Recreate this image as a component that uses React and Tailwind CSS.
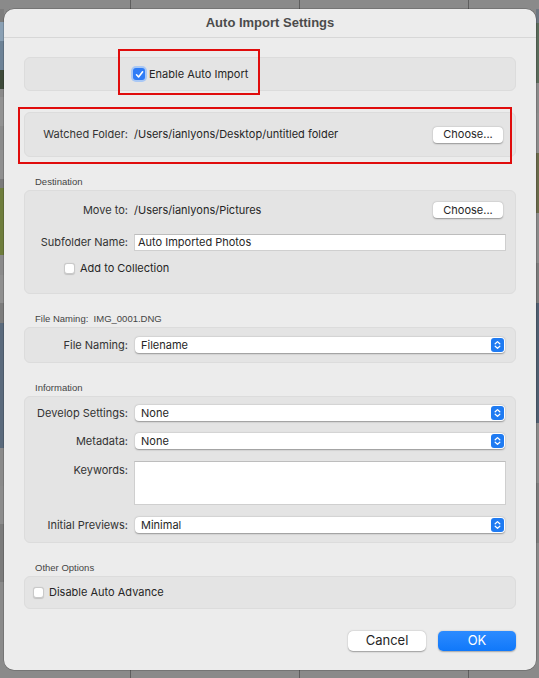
import React from "react";

const INTER = "font-['Inter','Liberation_Sans',Arial,sans-serif]";

function Stepper() {
  return (
    <div className="w-[13px] h-[14px] rounded-[3px] bg-[#1f7bf2] flex items-center justify-center">
      <svg width="7" height="10" viewBox="0 0 7 10">
        <path d="M1.2 3.8 L3.5 1.6 L5.8 3.8 M1.2 6.2 L3.5 8.4 L5.8 6.2" stroke="white" strokeWidth="1.3" fill="none" strokeLinecap="round" strokeLinejoin="round" />
      </svg>
    </div>
  );
}

function Select({ value }) {
  return (
    <div className={"ml-[1px] w-[370px] h-[16px] bg-white rounded-[4px] shadow-[0_0.5px_1.5px_rgba(0,0,0,0.35)] flex items-center justify-between pl-[6px] pr-[1px] text-[11px] text-[#262626] " + INTER}>
      <span>{value}</span>
      <Stepper />
    </div>
  );
}

function Label({ children, className = "" }) {
  return <div className={"w-[103px] shrink-0 text-right text-[11px] text-[#333] " + INTER + " " + className}>{children}</div>;
}

function ChooseButton() {
  return (
    <div className={"w-[70px] h-[16px] bg-white rounded-[4px] shadow-[0_0.5px_1.5px_rgba(0,0,0,0.35)] flex items-center justify-center text-[11px] text-[#262626] " + INTER}>
      Choose...
    </div>
  );
}

function Checkbox() {
  return <div className="w-[11px] h-[11px] shrink-0 bg-white rounded-[3px] border border-[#c9c9c9] shadow-[0_0.5px_1px_rgba(0,0,0,0.15)]" />;
}

function SectionLabel({ children }) {
  return <div className="mt-[19px] h-[12px] mb-[2px] pl-[11px] text-[9.5px] leading-[12px] text-[#444]">{children}</div>;
}

function Panel({ children, className = "" }) {
  return <div className={"bg-[#e4e4e4] border border-[#dcdcdc] rounded-[6px] " + className}>{children}</div>;
}

function Strip({ blocks }) {
  return (
    <div className="flex flex-col h-full w-full">
      {blocks.map((b, i) => (
        <div key={i} className="w-full" style={{ height: b[0], background: b[1] }} />
      ))}
    </div>
  );
}

const leftBlocks = [
  [9, "#8a8a8a"], [14, "#7d7d7d"], [20, "#8aa0b4"], [30, "#6d8296"], [20, "#3e4a3a"], [8, "#8a8a8a"],
  [30, "#929292"], [25, "#8a8a8a"], [30, "#8f8f8f"], [10, "#7a7a7a"], [70, "#6e7d3c"], [20, "#8a8a8a"],
  [30, "#8f8f8f"], [20, "#7c7c7c"], [130, "#5a6a7c"], [40, "#8a8a8a"], [40, "#8c8c8c"], [60, "#7b7b7b"], [100, "#8a8a8a"],
];
const rightBlocks = [
  [9, "#8a8a8a"], [14, "#6d7680"], [60, "#5a6a5a"], [30, "#8a8a8a"], [40, "#8c8c8c"], [60, "#6a6a4a"],
  [50, "#8a8a8a"], [40, "#7b7b7b"], [120, "#4f5e70"], [60, "#8a8a8a"], [60, "#7c7c7c"], [135, "#8a8a8a"],
];

export default function App() {
  return (
    <div className="w-[539px] h-[678px] bg-[#8a8a8a] overflow-hidden flex font-['Liberation_Sans',Arial,sans-serif]">
      <div className="w-[4px] h-full shrink-0">
        <Strip blocks={leftBlocks} />
      </div>
      <div className="w-[532px] shrink-0 flex flex-col">
        <div className="h-[9px] flex shrink-0">
          <div className="w-[127px] border-r border-[#5e5e5e]" />
          <div className="w-[169px] border-r border-[#5e5e5e]" />
          <div className="w-[169px] border-r border-[#5e5e5e]" />
          <div className="flex-1" />
        </div>
        <div className="relative h-[661px] bg-[#ececec] rounded-[10px] shadow-[0_0_0_0.5px_rgba(0,0,0,0.3)] flex flex-col px-[20px]">
          <div className="-mx-[20px] h-[29px] border-b border-[#d7d7d7] flex items-center justify-center text-[13px] font-bold text-[#4b4b4b]">
            Auto Import Settings
          </div>

          <Panel className="mt-[19px] h-[34px] flex items-center">
            <div className="ml-[106px] w-[16px] h-[16px] rounded-[5px] bg-[#a9c8f5] flex items-center justify-center">
              <div className="w-[12px] h-[12px] rounded-[3px] bg-[#2f7cf6] flex items-center justify-center">
                <svg width="9" height="9" viewBox="0 0 9 9">
                  <path d="M1.5 4.8 L3.6 7 L7.6 1.8" stroke="white" strokeWidth="1.6" fill="none" strokeLinecap="round" strokeLinejoin="round" />
                </svg>
              </div>
            </div>
            <span className={"ml-[2px] text-[11px] text-[#262626] " + INTER}>Enable Auto Import</span>
          </Panel>

          <Panel className="mt-[21px] h-[45px] flex items-center pr-[12px]">
            <Label>Watched Folder:</Label>
            <span className={"ml-[6px] flex-1 text-[11px] text-[#262626] " + INTER}>/Users/ianlyons/Desktop/untitled folder</span>
            <ChooseButton />
          </Panel>

          <SectionLabel>Destination</SectionLabel>
          <Panel className="h-[104px] pt-[11px] flex flex-col">
            <div className="flex items-center pr-[12px] h-[16px]">
              <Label>Move to:</Label>
              <span className={"ml-[6px] flex-1 text-[11px] text-[#262626] " + INTER}>/Users/ianlyons/Pictures</span>
              <ChooseButton />
            </div>
            <div className="mt-[16px] flex items-center h-[17px]">
              <Label>Subfolder Name:</Label>
              <div className={"ml-[6px] w-[372px] h-[17px] bg-white border border-[#cfcfcf] border-t-[#bdbdbd] flex items-center pl-[3px] text-[11px] text-[#262626] " + INTER}>
                Auto Imported Photos
              </div>
            </div>
            <div className="mt-[11px] h-[12px] flex items-center ml-[39px]">
              <Checkbox />
              <span className={"ml-[5px] text-[11px] text-[#262626] " + INTER}>Add to Collection</span>
            </div>
          </Panel>

          <SectionLabel>File Naming:&nbsp; IMG_0001.DNG</SectionLabel>
          <Panel className="h-[36px] flex items-center">
            <Label>File Naming:</Label>
            <div className="ml-[6px]"><Select value="Filename" /></div>
          </Panel>

          <SectionLabel>Information</SectionLabel>
          <Panel className="h-[147px] pt-[8px] flex flex-col">
            <div className="flex items-center">
              <Label>Develop Settings:</Label>
              <div className="ml-[6px]"><Select value="None" /></div>
            </div>
            <div className="mt-[11px] flex items-center">
              <Label>Metadata:</Label>
              <div className="ml-[6px]"><Select value="None" /></div>
            </div>
            <div className="mt-[12px] flex items-start">
              <Label className="mt-[1px]">Keywords:</Label>
              <div className="ml-[6px] w-[372px] h-[44px] bg-white border border-[#cfcfcf] border-t-[#bdbdbd]" />
            </div>
            <div className="mt-[12px] flex items-center">
              <Label>Initial Previews:</Label>
              <div className="ml-[6px]"><Select value="Minimal" /></div>
            </div>
          </Panel>

          <SectionLabel>Other Options</SectionLabel>
          <Panel className="h-[33px] flex items-center pl-[8px]">
            <Checkbox />
            <span className={"ml-[5px] text-[11px] text-[#262626] " + INTER}>Disable Auto Advance</span>
          </Panel>

          <div className="mt-[22px] flex justify-end gap-[12px]">
            <div className={"w-[78px] h-[20px] bg-white rounded-[5px] shadow-[0_0.5px_1.5px_rgba(0,0,0,0.35)] flex items-center justify-center text-[13px] text-[#262626] " + INTER}>
              Cancel
            </div>
            <div className={"w-[78px] h-[20px] rounded-[5px] bg-gradient-to-b from-[#2b8bff] to-[#0f78fa] shadow-[0_0.5px_1.5px_rgba(0,0,0,0.3)] flex items-center justify-center text-[13px] text-white " + INTER}>
              OK
            </div>
          </div>

          <div className="absolute left-[114px] top-[40px] w-[142px] h-[46px] border-2 border-[#e00c0c] pointer-events-none" />
          <div className="absolute left-[14px] top-[98px] w-[494px] h-[57px] border-2 border-[#e00c0c] pointer-events-none" />
        </div>
        <div className="flex-1 flex">
          <div className="w-[127px] border-r border-[#5e5e5e]" />
          <div className="w-[169px] border-r border-[#5e5e5e]" />
          <div className="w-[169px] border-r border-[#5e5e5e]" />
          <div className="flex-1" />
        </div>
      </div>
      <div className="w-[3px] h-full shrink-0">
        <Strip blocks={rightBlocks} />
      </div>
    </div>
  );
}
